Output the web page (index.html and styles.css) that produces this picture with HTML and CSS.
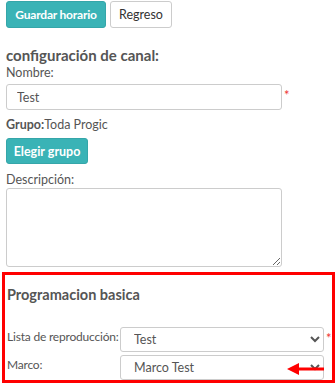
FILE: index.html
```html
<!DOCTYPE html>
<html>
<head>
    <meta charset="utf-8">
    <title>Horario</title>
    <link rel="stylesheet" href="styles.css">
</head>
<body>
    <div class="toolbar">
        <button class="primary save">Guardar horario</button>
        <button class="secondary back">Regreso</button>
    </div>

    <h3 class="section-title">configuración de canal:</h3>

    <div class="form-group">
        <label>Nombre:</label>
        <div class="field-row">
            <input type="text" value="Test">
            <span class="required">*</span>
        </div>
    </div>

    <div class="group-line"><b>Grupo:</b>Toda Progic</div>
    <button class="primary choose">Elegir grupo</button>

    <div class="form-group desc">
        <label>Descripción:</label>
        <textarea></textarea>
    </div>

    <div class="basic-box">
        <h3 class="box-title">Programacion basica</h3>
        <div class="inline-row">
            <label>Lista de reproducción:</label>
            <select><option>Test</option></select>
            <span class="required">*</span>
        </div>
        <div class="inline-row">
            <label>Marco:</label>
            <div class="select-wrap">
                <select><option>Marco Test</option></select>
                <svg class="arrow" width="37" height="12" viewBox="0 0 37 12">
                    <path d="M37 6H8" stroke="#f00" stroke-width="3"/>
                    <path d="M0 6L12 0V12Z" fill="#f00"/>
                </svg>
            </div>
        </div>
    </div>
</body>
</html>
```

FILE: styles.css
```css
* {
    margin: 0;
    padding: 0;
    box-sizing: border-box;
}

body {
    font-family: Lato, "Open Sans", Arial, sans-serif;
    font-size: 12.5px;
    line-height: 14px;
    color: #555;
    padding: 1px 6px 0 6px;
    background: #fff;
    overflow: hidden;
}

.toolbar {
    display: flex;
    gap: 4px;
}

button {
    height: 27px;
    padding: 0;
    border-radius: 3px;
    font-family: inherit;
    font-size: 12.5px;
}

button.primary {
    background: #3ab3b6;
    border: 1px solid #35a6a9;
    color: #fff;
    font-weight: 700;
}

button.secondary {
    background: #fff;
    border: 1px solid #ccc;
    color: #333;
}

button.save {
    width: 100px;
    font-size: 12px;
    letter-spacing: -0.2px;
}

button.back {
    width: 62px;
}

.section-title {
    font-size: 15px;
    line-height: 20px;
    font-weight: 700;
    margin-top: 17px;
    color: #555;
}

.form-group label {
    display: block;
    margin-top: 1px;
    margin-bottom: 4px;
}

.field-row {
    display: flex;
    align-items: flex-start;
}

input[type="text"] {
    width: 276px;
    height: 26px;
    padding: 0 10px;
    border: 1px solid #ccc;
    border-radius: 3px;
    font-family: inherit;
    font-size: 12.5px;
    color: #555;
}

.required {
    color: #e33;
    font-size: 13px;
    margin-left: 2px;
    margin-top: 4px;
}

.group-line {
    margin-top: 8px;
}

.group-line b {
    font-weight: 700;
}

button.choose {
    margin-top: 6px;
    width: 82px;
    height: 26px;
}

.desc label {
    margin-top: 9px;
    margin-bottom: 1px;
}

textarea {
    display: block;
    width: 276px;
    height: 79px;
    border: 1px solid #ccc;
    border-radius: 3px;
    resize: vertical;
}

.basic-box {
    margin: 5px -6px 0 -4px;
    height: 111px;
    border: 3px solid #f00;
    padding: 0 0 0 2px;
    overflow: hidden;
}

.box-title {
    font-size: 14.5px;
    line-height: 20px;
    font-weight: 700;
    margin-top: 10px;
    margin-bottom: 22px;
}

.inline-row {
    display: flex;
    align-items: flex-start;
    margin-bottom: 3px;
}

.inline-row label {
    width: 113px;
    flex-shrink: 0;
    white-space: nowrap;
    font-size: 12px;
    letter-spacing: -0.2px;
    padding-top: 3px;
}

select {
    width: 204px;
    height: 25px;
    padding: 0 9px;
    border: 1px solid #ccc;
    border-radius: 3px;
    background: #fff;
    font-family: inherit;
    font-size: 12.5px;
    color: #555;
}

.select-wrap {
    position: relative;
}

.arrow {
    position: absolute;
    left: 167px;
    top: 8px;
}
```
